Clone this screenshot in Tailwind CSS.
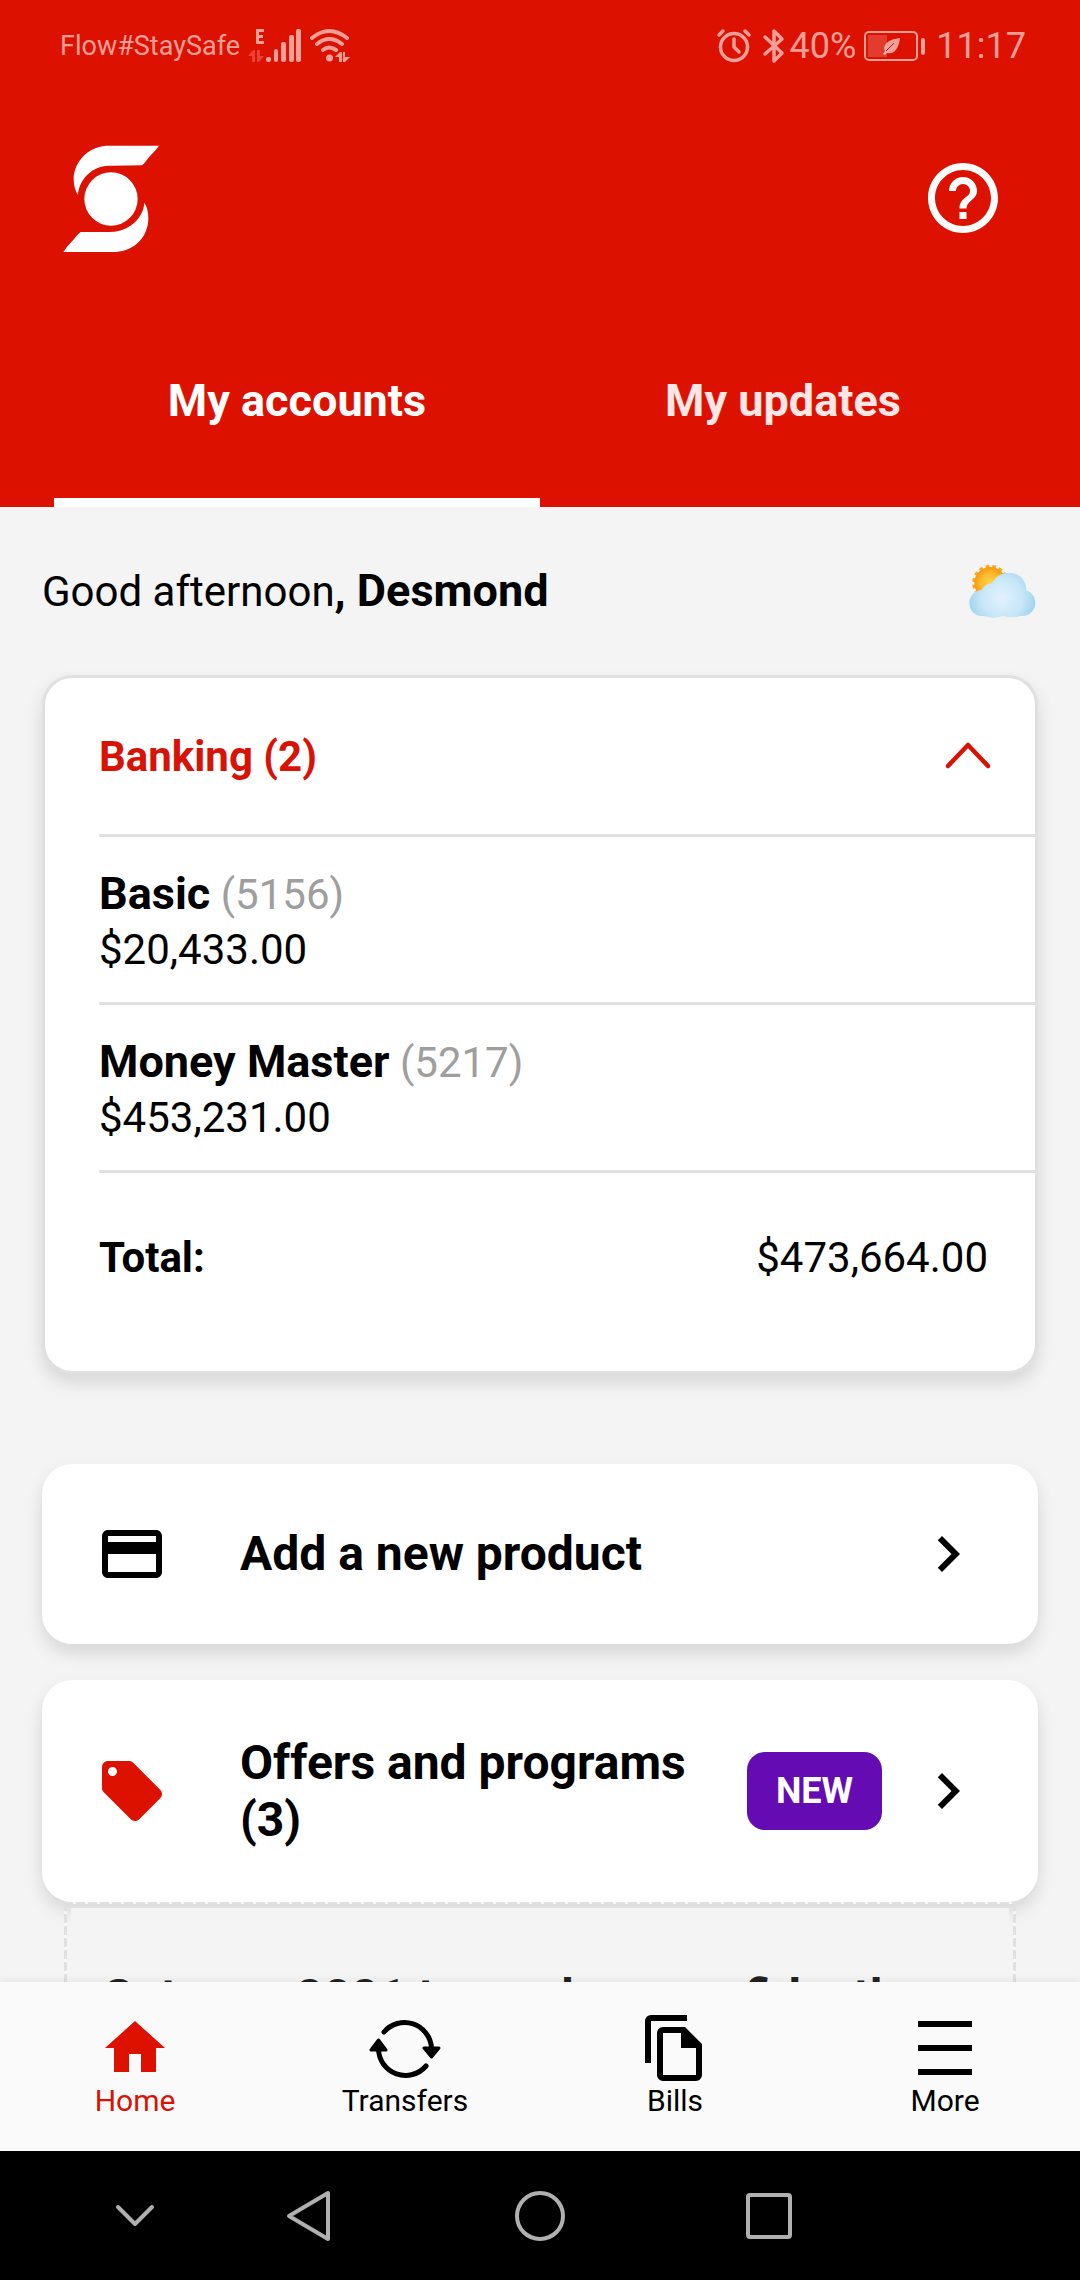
<!DOCTYPE html>
<html lang="en">
<head>
<meta charset="utf-8">
<meta name="viewport" content="width=device-width, initial-scale=1">
<title>My accounts</title>
<script src="https://cdn.jsdelivr.net/npm/@tailwindcss/browser@4"></script>
</head>
<body class="flex h-screen flex-col overflow-hidden bg-[#f4f4f4] font-['Roboto',sans-serif] text-[42px] text-black">

<header class="shrink-0 bg-[#dd1100] text-white">
  <div class="flex h-[92px] items-center justify-between pl-[60px] pr-[54px] text-white/60">
    <div class="flex items-center gap-[8px]">
      <span class="text-[27px]">Flow#StaySafe</span>
      <svg class="h-9 w-[54px]" viewBox="0 0 54 36" fill="currentColor" aria-label="Mobile signal">
        <path d="M8 1h8v3h-5v3h4v3h-4v3h5v3H8z"/>
        <path opacity=".35" d="M0 28l5-6h2v12H4v-6zM9 22h3v6h4l-5 6H9z"/>
        <rect x="18" y="29" width="5" height="5" rx="2"/><rect x="26" y="21" width="4" height="13" rx="2"/><rect x="33" y="14" width="5" height="20" rx="2"/><rect x="41" y="7" width="5" height="27" rx="2"/><rect x="48" y="1" width="5" height="33" rx="2"/>
      </svg>
      <svg class="h-9 w-10" viewBox="0 0 40 36" fill="none" stroke="currentColor" stroke-width="4" stroke-linecap="round" aria-label="Wi-Fi">
        <path d="M2 10Q19-4 37 10M7 16Q19 6 32 16M13 22Q19 17 26 22"/>
        <g fill="currentColor" stroke="none"><circle cx="19.500" cy="30" r="3.500"/><path d="M25 29l5-5h2v10h-3v-5zM33 24h2v5h5l-5 5h-2z"/></g>
      </svg>
    </div>
    <div class="flex items-center text-[36px] leading-none">
      <svg class="mr-[10px] h-9 w-[36px]" viewBox="0 0 36 36" fill="none" stroke="currentColor" stroke-width="3.500" stroke-linecap="round" aria-label="Alarm">
        <circle cx="18" cy="19" r="13.500"/><path d="M18 11v8l5 5M3 7l4-4M33 7l-4-4"/>
      </svg>
      <svg class="mr-[4px] h-9 w-6" viewBox="0 0 24 36" fill="none" stroke="currentColor" stroke-width="3.500" stroke-linejoin="round" stroke-linecap="round" aria-label="Bluetooth">
        <path d="M3 9l17 16-8 8V3l8 8L3 26"/>
      </svg>
      <span class="mr-[8px]">40%</span>
      <svg class="mr-[10px] h-[30px] w-[62px]" viewBox="0 0 62 30" fill="none" aria-label="Battery">
        <rect x="1" y="1" width="52" height="28" rx="4" stroke="currentColor" stroke-width="2"/>
        <rect x="4" y="4" width="19" height="22" fill="currentColor" opacity=".3"/>
        <rect x="57" y="7" width="4" height="17" rx="2" fill="currentColor"/>
        <path d="M36 7c-9 1-18 5-15 13l-2 3 2 1 2-2c9 2 12-7 13-15z" fill="currentColor"/><path d="M22 20l8-8" stroke="#dd1100"/>
      </svg>
      <time>11:17</time>
    </div>
  </div>

  <div class="flex h-[212px] items-center justify-between pl-[63px] pr-[75px]">
    <a href="#" aria-label="Home page">
      <svg class="h-[107px] w-24" viewBox="69 45 288 321" fill="white">
        <path d="M357 47H198C142 51 101 98 101 148c0 20 5 35 13 47 3-43 35-80 82-87 6-1 12-1 18-1l92-1c11-9 17-21 27-31 9-9 17-18 24-28z"/>
        <circle cx="213" cy="207" r="80"/>
        <path d="M70 366h158c56-3 97-46 97-101 0-20-4-34-12-47-3 44-40 81-90 87l-16 1h-85c-11 9-18 20-28 30-9 9-17 19-24 30z"/>
      </svg>
    </a>
    <button type="button" aria-label="Help">
      <svg class="size-[84px]" viewBox="0 0 24 24" fill="white"><path d="M11 18h2v-2h-2v2zm1-16C6.480 2 2 6.480 2 12s4.480 10 10 10 10-4.480 10-10S17.520 2 12 2zm0 18c-4.410 0-8-3.590-8-8s3.590-8 8-8 8 3.590 8 8-3.590 8-8 8zm0-14c-2.210 0-4 1.790-4 4h2c0-1.100.9-2 2-2s2 .9 2 2c0 2-3 1.750-3 5h2c0-2.250 3-2.500 3-5 0-2.210-1.790-4-4-4z"/></svg>
    </button>
  </div>

  <nav class="grid h-[203px] grid-cols-2 px-[54px] text-[45px] font-bold" aria-label="Sections">
    <a href="#" class="flex items-center justify-center border-b-[9px] border-white" aria-current="page">My accounts</a>
    <a href="#" class="flex items-center justify-center border-b-[9px] border-transparent text-white/90">My updates</a>
  </nav>
</header>

<main class="min-h-0 flex-1 overflow-y-auto px-[42px] [scrollbar-width:none]">
  <div class="flex h-[168px] items-center justify-between">
    <p>Good afternoon<b class="text-[45px]">, Desmond</b></p>
    <svg class="mr-[2px] h-[54px] w-[67px]" viewBox="86 64 201 162" aria-label="Partly cloudy">
      <defs>
        <radialGradient id="sun"><stop offset="0" stop-color="#ffd54a"/><stop offset=".6" stop-color="#fdb92e"/><stop offset="1" stop-color="#f59a0c"/></radialGradient>
        <radialGradient id="cloud" gradientUnits="userSpaceOnUse" cx="185" cy="165" r="105"><stop offset="0" stop-color="#e3f2fd"/><stop offset=".6" stop-color="#c6e6f7"/><stop offset="1" stop-color="#9dd3ee"/></radialGradient>
      </defs>
      <circle cx="150" cy="121" r="50" fill="none" stroke="#f9a825" stroke-width="9" stroke-dasharray="11 9"/>
      <circle cx="150" cy="121" r="48" fill="url(#sun)"/>
      <path d="M125 220c-22 0-38-18-38-39 0-22 17-38 36-39 8-12 18-19 32-20 10-20 29-32 51-32 31 0 53 24 52 53 17 6 27 21 27 38 0 22-17 38-38 39-12 0-16 4-35 4-14 0-16-4-27-3-10 3-14 4-25 4-14 0-22-5-35-5z" fill="url(#cloud)"/>
    </svg>
  </div>

  <section class="rounded-[30px] border-[3px] border-[#e0e0e0] bg-white shadow-[0_9px_18px_rgba(0,0,0,0.12)]">
    <button type="button" aria-expanded="true" class="flex h-[156px] w-full items-center justify-between pl-[54px] pr-[44px] font-bold text-[#d81305]">
      Banking (2)
      <svg class="h-7 w-[46px]" viewBox="0 0 46 28" fill="none" stroke="currentColor" stroke-width="4.500" stroke-linecap="round" stroke-linejoin="round"><path d="M3 24L23 3l20 21"/></svg>
    </button>
    <ul class="ml-[54px] border-b-[3px] border-[#e0e0e0] leading-[55px]">
      <li class="h-[168px] border-t-[3px] border-[#e0e0e0] pt-[29px]">
        <a href="#" class="block"><b class="text-[45px]">Basic</b> <span class="text-[#9e9e9e]">(5156)</span><br>$20,433.00</a>
      </li>
      <li class="h-[168px] border-t-[3px] border-[#e0e0e0] pt-[29px]">
        <a href="#" class="block"><b class="text-[45px]">Money Master</b> <span class="text-[#9e9e9e]">(5217)</span><br>$453,231.00</a>
      </li>
    </ul>
    <p class="flex items-center justify-between pb-[86px] pl-[54px] pr-[47px] pt-[57px] leading-[55px]"><b>Total:</b><span>$473,664.00</span></p>
  </section>

  <a href="#" class="mt-[90px] flex h-[180px] items-center rounded-[30px] bg-white px-[54px] text-[48px] font-bold shadow-[0_9px_18px_rgba(0,0,0,0.12)]">
    <svg class="mr-[72px] size-[72px] shrink-0" viewBox="0 0 24 24"><path d="M20 4H4c-1.110 0-1.990.89-1.990 2L2 18c0 1.110.89 2 2 2h16c1.110 0 2-.89 2-2V6c0-1.110-.89-2-2-2zm0 14H4v-6h16v6zm0-10H4V6h16v2z"/></svg>
    <span class="flex-1">Add a new product</span>
    <svg class="size-[72px] shrink-0" viewBox="0 0 24 24"><path d="M8.590 16.590L13.170 12 8.590 7.410 10 6l6 6-6 6z"/></svg>
  </a>

  <a href="#" class="mt-9 flex items-center rounded-[30px] bg-white px-[54px] py-[54px] text-[48px] font-bold leading-[57px] shadow-[0_9px_18px_rgba(0,0,0,0.12)]">
    <svg class="mr-[72px] size-[72px] shrink-0 text-[#dd1100]" viewBox="0 0 24 24" fill="currentColor"><path d="M21.410 11.580l-9-9C12.050 2.220 11.550 2 11 2H4c-1.100 0-2 .9-2 2v7c0 .55.22 1.050.59 1.420l9 9c.36.36.86.58 1.410.58.55 0 1.050-.22 1.410-.59l7-7c.37-.36.59-.86.59-1.410 0-.55-.23-1.060-.59-1.420zM5.500 7C4.670 7 4 6.330 4 5.500S4.670 4 5.500 4 7 4.670 7 5.500 6.330 7 5.500 7z"/></svg>
    <span class="flex-1">Offers and programs (3)</span>
    <span class="mx-[30px] flex h-[78px] w-[135px] items-center justify-center rounded-[18px] bg-[#640bb4] text-[36px] text-white">NEW</span>
    <svg class="size-[72px] shrink-0" viewBox="0 0 24 24"><path d="M8.590 16.590L13.170 12 8.590 7.410 10 6l6 6-6 6z"/></svg>
  </a>

  <section class="mx-[22px] bg-[repeating-linear-gradient(90deg,#e0e0e0_0_9px,#f8f8f8_9px_12px),repeating-linear-gradient(180deg,#e0e0e0_0_9px,#f8f8f8_9px_12px),repeating-linear-gradient(180deg,#e0e0e0_0_9px,#f8f8f8_9px_12px)] bg-[length:100%_2px,3px_100%,3px_100%] bg-[position:0_0,0_0,100%_0] bg-no-repeat px-[7px] pt-[6px]">
    <h2 class="bg-[#f4f4f4] px-[31px] pb-9 pt-[60px] text-[48px] font-bold leading-[57px] text-[#212121]">Get your 2021 taxes done confidently</h2>
  </section>
</main>

<nav class="grid h-[169px] shrink-0 grid-cols-4 bg-[#fafafa] pt-[29px] text-center text-[30px] leading-9 shadow-[0_0_9px_rgba(0,0,0,0.08)]" aria-label="Main">
  <a href="#" class="flex flex-col items-center text-[#d81305]" aria-current="page">
    <svg class="size-[72px]" viewBox="0 0 72 72" fill="#dd1100"><path d="M36 10l30 27h-9v24H42V43H30v18H15V37H6z"/></svg>Home</a>
  <a href="#" class="flex flex-col items-center">
    <svg class="size-[72px]" viewBox="0 0 72 72" fill="none" stroke="#000" stroke-width="5" stroke-linecap="round"><path d="M15 21A27 27 0 0 1 62.500 37M57 55A27 27 0 0 1 9.500 38"/><path d="M55 37h15l-7.500 9zM2 39h15L9.500 29z" fill="#000" stroke-width="3" stroke-linejoin="round"/></svg>Transfers</a>
  <a href="#" class="flex flex-col items-center">
    <svg class="size-[72px]" viewBox="0 0 72 72"><path d="M48 4H12a6 6 0 0 0-6 6v42h6V10h36z"/><path fill-rule="evenodd" d="M24 16h22l17 17v31a6 6 0 0 1-6 6H24a6 6 0 0 1-6-6V22a6 6 0 0 1 6-6zm0 6v42h33V37H42V22z"/></svg>Bills</a>
  <a href="#" class="flex flex-col items-center">
    <svg class="size-[72px]" viewBox="0 0 72 72"><path d="M9 10h54v6H9zM9 34h54v6H9zM9 58h54v6H9z"/></svg>More</a>
</nav>

<footer class="grid h-[129px] shrink-0 grid-cols-[174fr_174fr_288fr_170fr_226fr] items-center justify-items-center bg-black pl-12 text-[#b0b0b0]">
  <button type="button" aria-label="Hide navigation bar"><svg class="size-[54px]" viewBox="0 0 54 54" fill="none" stroke="currentColor" stroke-width="4" stroke-linecap="round" stroke-linejoin="round"><path d="M10 18l17 17 17-17"/></svg></button>
  <button type="button" aria-label="Back"><svg class="size-[54px]" viewBox="0 0 54 54" fill="none" stroke="currentColor" stroke-width="4" stroke-linejoin="round"><path d="M46 4v46L7 27z"/></svg></button>
  <button type="button" aria-label="Home"><svg class="size-[54px]" viewBox="0 0 54 54" fill="none" stroke="currentColor" stroke-width="4"><circle cx="27" cy="27" r="23"/></svg></button>
  <button type="button" aria-label="Recent apps"><svg class="size-[54px]" viewBox="0 0 54 54" fill="none" stroke="currentColor" stroke-width="4"><rect x="6" y="6" width="42" height="42" rx="2"/></svg></button>
</footer>
</body>
</html>
